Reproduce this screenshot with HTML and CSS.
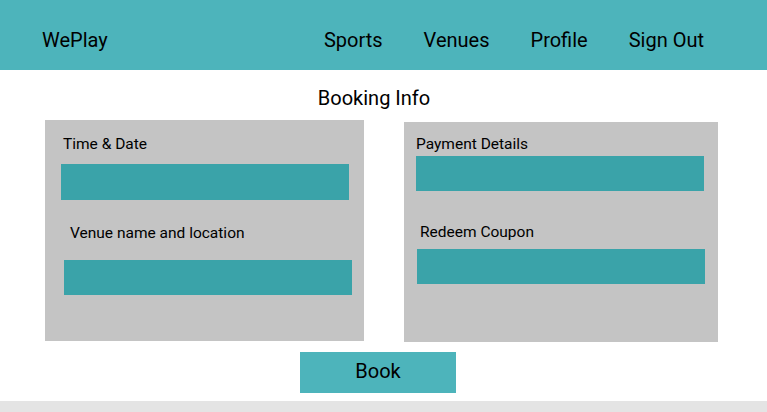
FILE: index.html
```html
<!DOCTYPE html>
<html lang="en">
<head>
<meta charset="utf-8">
<title>WePlay - Booking Info</title>
<link rel="stylesheet" href="styles.css">
</head>
<body>
<header class="topbar">
  <div class="brand">WePlay</div>
  <nav class="nav">
    <a class="nav-link" href="#">Sports</a>
    <a class="nav-link" href="#">Venues</a>
    <a class="nav-link" href="#">Profile</a>
    <a class="nav-link" href="#">Sign Out</a>
  </nav>
</header>
<main class="content">
  <h1 class="title">Booking Info</h1>
  <div class="panels">
    <section class="panel panel-left">
      <div class="label label-a">Time &amp; Date</div>
      <div class="field field-a"></div>
      <div class="label label-b">Venue name and location</div>
      <div class="field field-b"></div>
    </section>
    <section class="panel panel-right">
      <div class="label label-c">Payment Details</div>
      <div class="field field-c"></div>
      <div class="label label-d">Redeem Coupon</div>
      <div class="field field-d"></div>
    </section>
  </div>
  <div class="actions">
    <button class="book-btn" type="button">Book</button>
  </div>
</main>
<footer class="footer"></footer>
</body>
</html>
```

FILE: styles.css
```css
* { box-sizing: border-box; }

html, body {
  margin: 0;
  padding: 0;
  background: #ffffff;
  font-family: Roboto, "Liberation Sans", Arial, sans-serif;
  color: #000;
}

.topbar {
  height: 70px;
  background: #4db4bb;
  display: flex;
  align-items: center;
  padding: 10px 63px 0 42px;
}

.brand {
  font-size: 20px;
  line-height: 24px;
}

.nav {
  margin-left: auto;
  display: flex;
  gap: 41px;
}

.nav-link {
  font-size: 20px;
  line-height: 24px;
  color: #000;
  text-decoration: none;
}

.content {
  display: flex;
  flex-direction: column;
}

.title {
  margin: 16px 0 0 0;
  font-size: 20px;
  line-height: 24px;
  font-weight: 400;
  text-align: center;
  padding-right: 19px;
}

.panels {
  display: flex;
  align-items: flex-start;
  gap: 40px;
  padding-left: 45px;
  margin-top: 10px;
}

.panel {
  background: #c4c4c4;
  display: flex;
  flex-direction: column;
  align-items: flex-start;
}

.panel-left {
  width: 319px;
  height: 221px;
  padding-top: 15px;
}

.panel-right {
  width: 314px;
  height: 220px;
  margin-top: 2px;
  padding-top: 13px;
}

.label {
  font-size: 15.5px;
  line-height: 18px;
}

.field {
  width: 288px;
  height: 35px;
  background: #3aa3a9;
}

.label-a { margin-left: 18px; }
.field-a { margin-left: 16px; margin-top: 11px; height: 36px; }
.label-b { margin-left: 25px; margin-top: 24px; }
.field-b { margin-left: 19px; margin-top: 18px; }

.label-c { margin-left: 12px; }
.field-c { margin-left: 12px; margin-top: 3px; }
.label-d { margin-left: 16px; margin-top: 32px; }
.field-d { margin-left: 13px; margin-top: 8px; }

.actions {
  display: flex;
  justify-content: center;
  padding-right: 11px;
  margin-top: 10px;
}

.book-btn {
  width: 156px;
  height: 41px;
  border: 0;
  padding: 0 0 4px 0;
  background: #4db4bb;
  font-family: Roboto, "Liberation Sans", Arial, sans-serif;
  font-size: 20px;
  line-height: 24px;
  color: #000;
}

.footer {
  margin-top: 8px;
  height: 40px;
  background: #e4e4e4;
}
```
